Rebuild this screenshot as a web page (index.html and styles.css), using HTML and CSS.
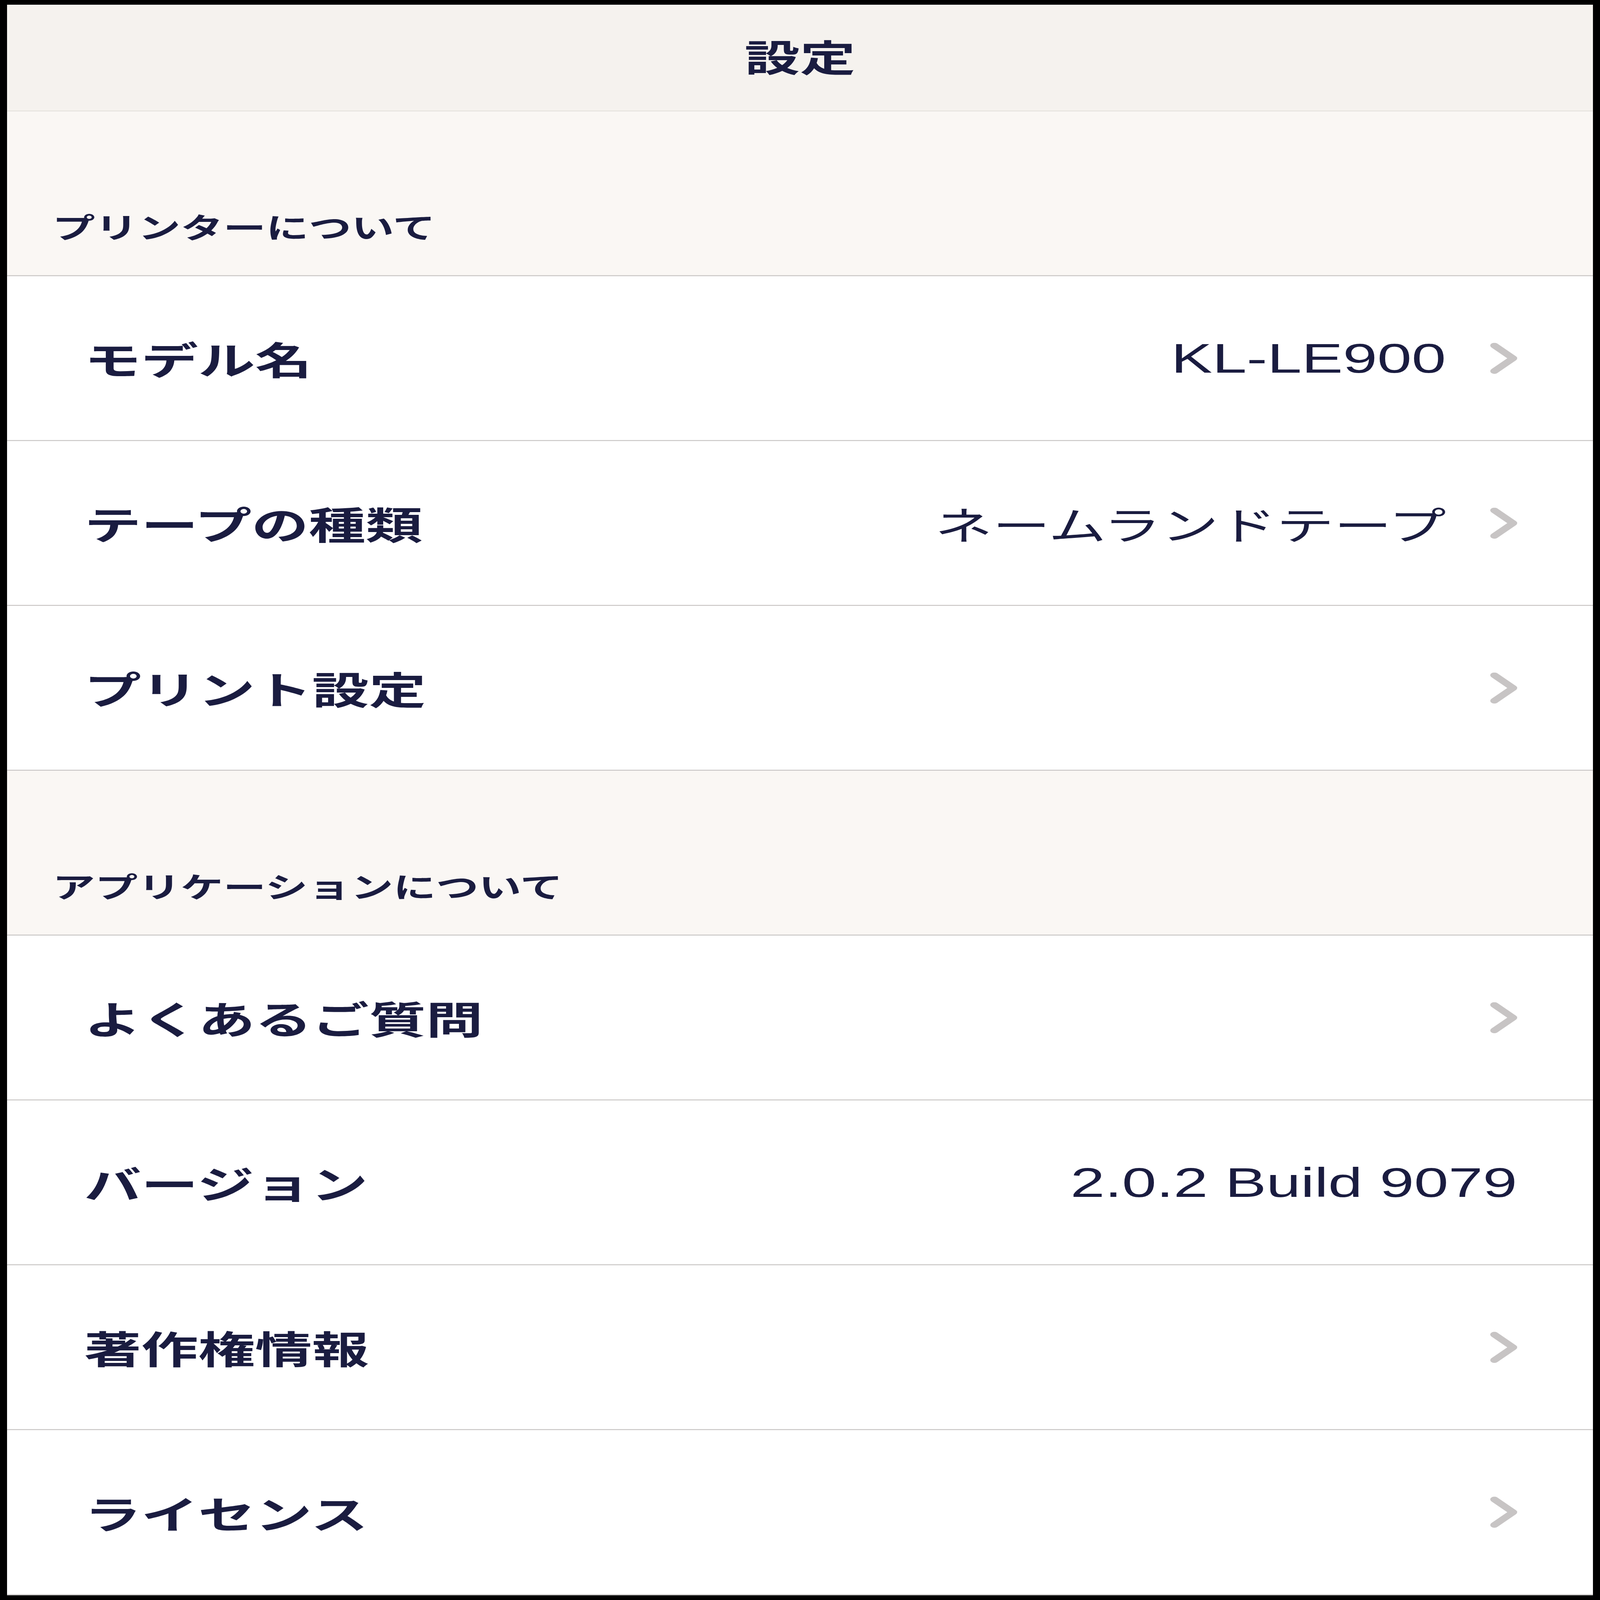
FILE: index.html
```html
<!DOCTYPE html>
<html lang="ja">
<head>
<meta charset="utf-8">
<title>設定</title>
<link rel="stylesheet" href="styles.css">
</head>
<body>
<div class="stage">
  <div class="fit">
    <div class="screen">
      <header class="navbar"><h1 class="title">設定</h1></header>

      <div class="section-header"><span>プリンターについて</span></div>
      <div class="row">
        <span class="label">モデル名</span>
        <span class="value latin">KL-LE900</span>
        <svg class="chev" viewBox="0 0 72 124" width="72" height="124"><polyline points="11,11 61,62 11,113"/></svg>
      </div>
      <div class="row">
        <span class="label">テープの種類</span>
        <span class="value">ネームランドテープ</span>
        <svg class="chev" viewBox="0 0 72 124" width="72" height="124"><polyline points="11,11 61,62 11,113"/></svg>
      </div>
      <div class="row">
        <span class="label">プリント設定</span>
        <svg class="chev" viewBox="0 0 72 124" width="72" height="124"><polyline points="11,11 61,62 11,113"/></svg>
      </div>

      <div class="section-header"><span>アプリケーションについて</span></div>
      <div class="row">
        <span class="label">よくあるご質問</span>
        <svg class="chev" viewBox="0 0 72 124" width="72" height="124"><polyline points="11,11 61,62 11,113"/></svg>
      </div>
      <div class="row">
        <span class="label">バージョン</span>
        <span class="value latin">2.0.2 Build 9079</span>
      </div>
      <div class="row">
        <span class="label">著作権情報</span>
        <svg class="chev" viewBox="0 0 72 124" width="72" height="124"><polyline points="11,11 61,62 11,113"/></svg>
      </div>
      <div class="row last">
        <span class="label">ライセンス</span>
        <svg class="chev" viewBox="0 0 72 124" width="72" height="124"><polyline points="11,11 61,62 11,113"/></svg>
      </div>
    </div>
  </div>
</div>
<script src="app.js"></script>
</body>
</html>
```

FILE: styles.css
```css
* { box-sizing: border-box; }

html, body {
  margin: 0;
  padding: 0;
  width: 100%;
  height: 100%;
  overflow: hidden;
  background: #000;
}

/* The window-sized stage clips the scaled design so nothing overflows. */
.stage {
  width: 100vw;
  height: 100vh;
  overflow: hidden;
  background: #000;
}

/* The design is drawn at 4271 x 6377 and scaled to the window (see app.js). */
.fit {
  width: 4271px;
  height: 6377px;
  padding: 19px;
  background: #000;
  transform-origin: 0 0;
  transform: scale(var(--sx, 1), var(--sy, 1));
}

.screen {
  width: 100%;
  height: 100%;
  background: #fff;
  color: #1a1c40;
  font-family: "Noto Sans CJK JP", sans-serif;
  display: flex;
  flex-direction: column;
}

.navbar {
  flex: none;
  height: 425px;
  background: #f5f2ee;
  border-bottom: 3px solid #e0ddd9;
  display: flex;
  align-items: center;
  justify-content: center;
  padding-bottom: 14px;
}

.title {
  margin: 0;
  font-size: 148px;
  font-weight: 700;
  line-height: 1.2;
}

.section-header {
  flex: none;
  height: 657px;
  background: #faf7f4;
  border-bottom: 4px solid #c9c6c5;
  display: flex;
  align-items: flex-end;
  padding: 0 0 128px 121px;
  font-size: 114px;
  font-weight: 700;
  line-height: 1.2;
}

.row {
  flex: none;
  height: 657px;
  background: #fff;
  border-bottom: 4px solid #c9c6c5;
  display: flex;
  align-items: center;
  padding: 0 202px 0 206px;
}

.row.last {
  flex: 1;
}

.label {
  flex: 1;
  font-size: 152px;
  font-weight: 700;
  line-height: 1.2;
}

.value {
  font-size: 154px;
  font-weight: 400;
  line-height: 1.2;
}

.value.latin {
  font-family: "Liberation Sans", "Noto Sans CJK JP", sans-serif;
  font-size: 165px;
}

.chev {
  flex: none;
  margin-left: 118px;
  fill: none;
  stroke: #c7c4c4;
  stroke-width: 22;
  stroke-linecap: round;
  stroke-linejoin: round;
}
```

FILE: app.js
```js
// Fit the 4271 x 6377 design into whatever window the page is opened in.
(function () {
  var root = document.documentElement;
  function fit() {
    root.style.setProperty('--sx', window.innerWidth / 4271);
    root.style.setProperty('--sy', window.innerHeight / 6377);
  }
  fit();
  window.addEventListener('resize', fit);
})();
```
